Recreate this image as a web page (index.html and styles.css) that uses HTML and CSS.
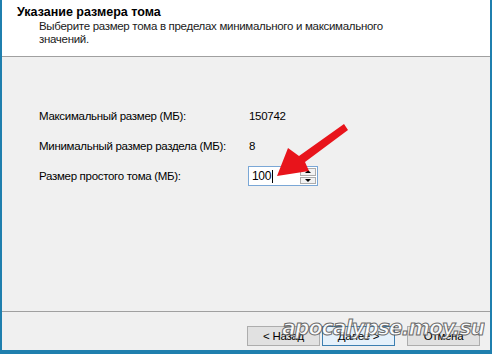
FILE: index.html
```html
<!DOCTYPE html>
<html lang="ru">
<head>
    <meta charset="UTF-8">
    <title>Мастер создания простых томов</title>
    <link rel="stylesheet" href="styles.css">
</head>
<body>
    <div class="window">
        <header class="wiz-header">
            <h1 class="wiz-title">Указание размера тома</h1>
            <p class="wiz-desc">Выберите размер тома в пределах минимального и максимального значений.</p>
        </header>

        <main class="wiz-body">
            <div class="size-grid">
                <span class="lbl">Максимальный размер (МБ):</span>
                <span class="val">150742</span>
                <span class="lbl">Минимальный размер раздела (МБ):</span>
                <span class="val">8</span>
                <span class="lbl">Размер простого тома (МБ):</span>
                <div class="updown">
                    <div class="updown-text">100<span class="caret"></span></div>
                    <div class="spin">
                        <span class="spin-btn up"></span>
                        <span class="spin-btn down"></span>
                    </div>
                </div>
            </div>
        </main>

        <footer class="wiz-footer">
            <button class="btn">&lt; Назад</button>
            <button class="btn btn-default">Далее &gt;</button>
            <button class="btn btn-cancel">Отмена</button>
        </footer>

        <!-- red arrow drawn on top of the screenshot -->
        <svg class="arrow" width="492" height="354" viewBox="0 0 492 354">
            <polygon points="344,124 348,130 305,162 309,171 277,176 288,148 299,156" fill="#e8141b"/>
        </svg>

        <div class="watermark">apocalypse.moy.su</div>
    </div>
</body>
</html>
```

FILE: styles.css
```css
body {
    margin: 0;
    padding: 0;
    background: #f0f0f0;
}

.window {
    position: relative;
    width: 492px;
    height: 354px;
    box-sizing: border-box;
    border: 2px solid #1f7fae;
    border-top: 0;
    border-bottom-width: 4px;
    display: flex;
    flex-direction: column;
    background: #f0f0f0;
    font-family: "Liberation Sans", Arial, sans-serif;
    font-size: 11.5px;
    letter-spacing: -0.3px;
    color: #000;
    overflow: hidden;
}

.wiz-header {
    height: 57px;
    box-sizing: border-box;
    background: #fff;
    border-bottom: 1px solid #a0a0a0;
    padding: 5px 0 0 15px;
}

.wiz-title {
    margin: 0;
    font-size: 12.5px;
    font-weight: bold;
    line-height: 15px;
    letter-spacing: 0;
}

.wiz-desc {
    margin: 0 0 0 22px;
    width: 355px;
    line-height: 13px;
    color: #1a1a1a;
}

.wiz-body {
    flex: 1;
    padding: 44px 0 0 37px;
}

.size-grid {
    display: grid;
    grid-template-columns: 210px auto;
    grid-auto-rows: 30px;
    align-items: center;
}

.lbl {
    white-space: nowrap;
}

.updown {
    display: flex;
    width: 70px;
    height: 20px;
    box-sizing: border-box;
    margin-left: -1px;
    border: 1px solid #7aa7d6;
    background: #fff;
}

.updown-text {
    flex: 1;
    padding-left: 3px;
    line-height: 18px;
    display: flex;
    align-items: center;
    font-size: 12px;
}

.caret {
    display: inline-block;
    width: 1px;
    height: 13px;
    background: #000;
    margin-left: 1px;
}

.spin {
    display: flex;
    flex-direction: column;
    gap: 1px;
    padding: 1px 1px 1px 0;
    width: 16px;
}

.spin-btn {
    flex: 1;
    border: 1px solid #acacac;
    background: #f2f2f2;
    display: flex;
    align-items: center;
    justify-content: center;
}

.spin-btn.up::after,
.spin-btn.down::after {
    content: "";
    width: 0;
    height: 0;
    border-left: 3px solid transparent;
    border-right: 3px solid transparent;
}

.spin-btn.up::after {
    border-bottom: 3px solid #000;
}

.spin-btn.down::after {
    border-top: 3px solid #000;
}

.wiz-footer {
    height: 39px;
    box-sizing: border-box;
    border-top: 1px solid #a0a0a0;
    display: flex;
    justify-content: flex-end;
    align-items: flex-start;
    padding: 14px 10px 0 0;
    gap: 2px;
}

.btn {
    width: 73px;
    height: 20px;
    box-sizing: border-box;
    border: 1px solid #adadad;
    background: #e1e1e1;
    font-family: "Liberation Sans", Arial, sans-serif;
    font-size: 11.5px;
    letter-spacing: -0.3px;
    padding: 0;
    color: #000;
}

.btn-default {
    border-color: #3c7fb1;
    background: #e5f1fb;
}

.btn-cancel {
    margin-left: 10px;
}

.arrow {
    position: absolute;
    left: -2px;
    top: 0;
    pointer-events: none;
}

.watermark {
    position: absolute;
    left: 280px;
    top: 316px;
    font-family: "DejaVu Sans", sans-serif;
    font-size: 20.5px;
    font-weight: bold;
    font-style: italic;
    letter-spacing: -1px;
    color: #fff;
    -webkit-text-stroke: 1px #555;
    opacity: 0.85;
}
```
